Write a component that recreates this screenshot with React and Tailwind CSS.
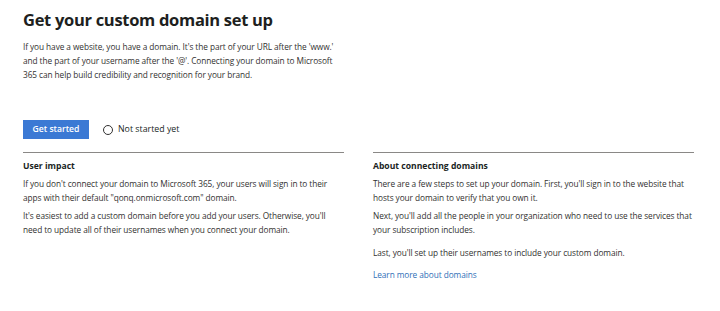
export default function App() {
  const body = "text-[8.3px] leading-[14px] tracking-[-0.08px] whitespace-nowrap";
  return (
    <div className="w-[720px] h-[311px] bg-white pl-[23px] pr-[26px] pt-[9px] text-[#323130]" style={{ fontFamily: '"Open Sans", "Noto Sans", sans-serif' }}>
      <h1 className="text-[16.5px] leading-[22px] font-bold text-[#201f1e] tracking-[-0.3px]">Get your custom domain set up</h1>
      <p className={`mt-[9px] ${body}`}>
        If you have a website, you have a domain. It's the part of your URL after the 'www.'<br />
        and the part of your username after the '@'. Connecting your domain to Microsoft<br />
        365 can help build credibility and recognition for your brand.
      </p>
      <div className="mt-[38px] flex items-center">
        <button className="h-[19px] w-[66px] bg-[#3b79d4] text-white text-[8.6px] font-semibold">Get started</button>
        <div className="ml-[14px] flex items-center gap-[5px] text-[8.8px] text-[#201f1e]">
          <span className="w-[10px] h-[10px] rounded-full border border-[#323130]"></span>
          <span>Not started yet</span>
        </div>
      </div>
      <div className="mt-[13px] grid grid-cols-2 gap-[29px]">
        <div className="border-t border-[#8a8886] pt-[6px]">
          <h2 className="text-[8.6px] leading-[14px] font-bold text-[#201f1e]">User impact</h2>
          <p className={`mt-[4px] ${body}`}>
            If you don't connect your domain to Microsoft 365, your users will sign in to their<br />
            apps with their default "qonq.onmicrosoft.com" domain.
          </p>
          <p className={`mt-[4px] ${body}`}>
            It's easiest to add a custom domain before you add your users. Otherwise, you'll<br />
            need to update all of their usernames when you connect your domain.
          </p>
        </div>
        <div className="border-t border-[#8a8886] pt-[6px]">
          <h2 className="text-[8.6px] leading-[14px] font-bold text-[#201f1e]">About connecting domains</h2>
          <p className={`mt-[4px] ${body}`}>
            There are a few steps to set up your domain. First, you'll sign in to the website that<br />
            hosts your domain to verify that you own it.
          </p>
          <p className={`mt-[4px] ${body}`}>
            Next, you'll add all the people in your organization who need to use the services that<br />
            your subscription includes.
          </p>
          <p className={`mt-[9px] ${body}`}>Last, you'll set up their usernames to include your custom domain.</p>
          <a className={`block mt-[8px] ${body} text-[#2f6fb7]`}>Learn more about domains</a>
        </div>
      </div>
    </div>
  );
}
